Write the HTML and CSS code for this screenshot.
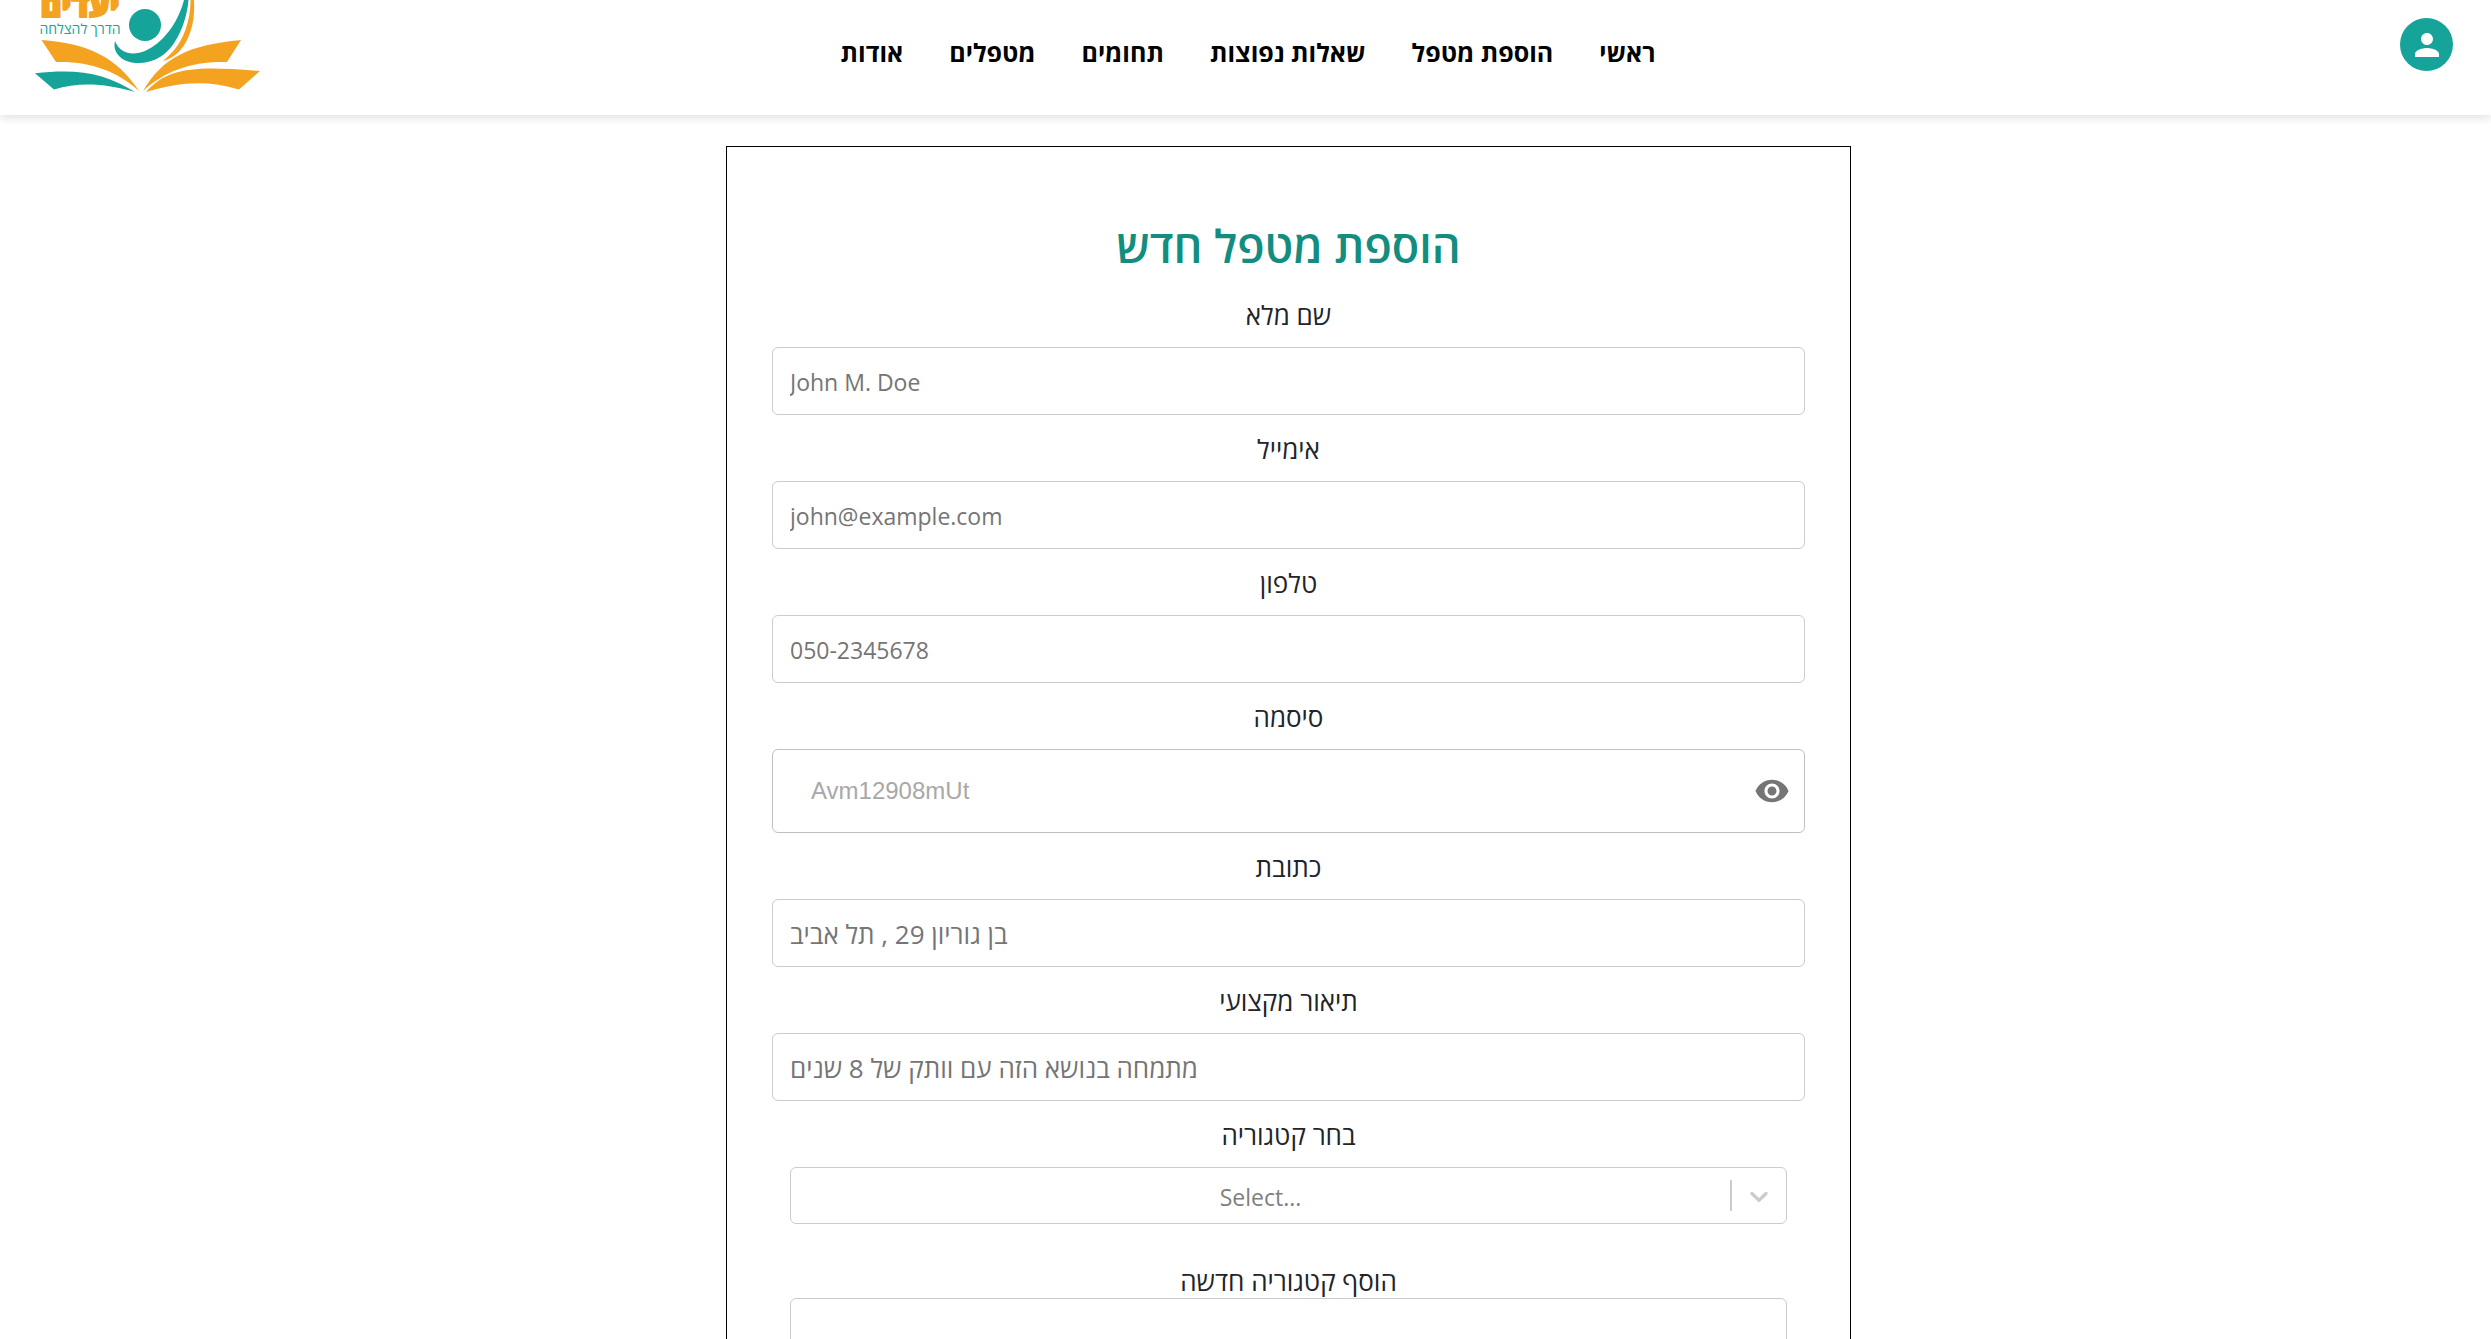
FILE: index.html
```html
<!DOCTYPE html>
<html lang="he">
<head>
<meta charset="utf-8">
<meta name="viewport" content="width=device-width, initial-scale=1">
<title>הוספת מטפל חדש</title>
<link rel="stylesheet" href="styles.css">
</head>
<body>
<header class="site-header">
  <a class="logo" href="#" aria-label="יעדים">
    <svg class="logo-art" viewBox="35 0 226 94" aria-hidden="true">
      <text class="logo-name" x="80" y="17" text-anchor="middle">יעדים</text>
      <text class="logo-tagline" x="80" y="34" text-anchor="middle">הדרך להצלחה</text>
      <g fill="#16a399">
        <circle cx="145" cy="25" r="16"/>
        <path d="M115 41C120 54 133 56 145 51C163 43 178 23 184 0H188.500C187 20 177 47 160 57C147 65 129 65 120 57C114 51 114 46 115 41Z"/>
        <path d="M35 73.300C80 68 106 74 135 92C104 83 79 82 54 89.500Z"/>
      </g>
      <g fill="#f4a321">
        <path d="M190.500 0H194C195 18 192 31 186 42C181 51 174 58 163 61C174 52 181 42 185 31C189 20 190.500 10 190.500 0Z"/>
        <path d="M41.500 40C87 43 117 57 139 91C117 71 90 61 56 62Z"/>
        <path d="M241 40C189 45 163 57 143 91C165 71 191 61 227 62Z"/>
        <path d="M260 71C199 66 168 66 146 92C180 82 207 80 239 89.500Z"/>
      </g>
    </svg>
  </a>
  <nav class="main-nav" dir="rtl">
    <a href="#">ראשי</a>
    <a href="#">הוספת מטפל</a>
    <a href="#">שאלות נפוצות</a>
    <a href="#">תחומים</a>
    <a href="#">מטפלים</a>
    <a href="#">אודות</a>
  </nav>
  <button class="account" type="button" aria-label="חשבון">
    <svg viewBox="0 0 24 24" aria-hidden="true"><path d="M12 12c2.210 0 4-1.790 4-4s-1.790-4-4-4-4 1.790-4 4 1.790 4 4 4zm0 2c-2.670 0-8 1.340-8 4v2h16v-2c0-2.660-5.330-4-8-4z"/></svg>
  </button>
</header>

<main class="page">
  <form class="card">
    <h1 class="title">הוספת מטפל חדש</h1>

    <div class="field">
      <label for="name">שם מלא</label>
      <input class="text-box" id="name" type="text" placeholder="John M. Doe">
    </div>
    <div class="field">
      <label for="email">אימייל</label>
      <input class="text-box" id="email" type="email" placeholder="john@example.com">
    </div>
    <div class="field">
      <label for="phone">טלפון</label>
      <input class="text-box" id="phone" type="tel" placeholder="050-2345678">
    </div>
    <div class="field">
      <label for="password">סיסמה</label>
      <div class="password-box">
        <input id="password" type="password" placeholder="Avm12908mUt">
        <button class="reveal" type="button" aria-label="הצג סיסמה">
          <svg viewBox="0 0 24 24" aria-hidden="true"><path d="M12 4.500C7 4.500 2.730 7.610 1 12c1.730 4.390 6 7.500 11 7.500s9.270-3.110 11-7.500c-1.730-4.390-6-7.500-11-7.500zM12 17c-2.760 0-5-2.240-5-5s2.240-5 5-5 5 2.240 5 5-2.240 5-5 5zm0-8c-1.660 0-3 1.340-3 3s1.340 3 3 3 3-1.340 3-3-1.340-3-3-3z"/></svg>
        </button>
      </div>
    </div>
    <div class="field">
      <label for="address">כתובת</label>
      <input class="text-box hebrew" id="address" type="text" placeholder="בן גוריון 29 , תל אביב">
    </div>
    <div class="field">
      <label for="about">תיאור מקצועי</label>
      <input class="text-box hebrew" id="about" type="text" placeholder="מתמחה בנושא הזה עם וותק של 8 שנים">
    </div>
    <div class="field">
      <label for="category">בחר קטגוריה</label>
      <div class="select-box">
        <select id="category"><option>Select...</option></select>
        <span class="divider"></span>
        <svg viewBox="0 0 20 20" aria-hidden="true"><path d="M4.516 7.548c0.436-0.446 1.043-0.481 1.576 0l3.908 3.747 3.908-3.747c0.533-0.481 1.141-0.446 1.574 0 0.436 0.445 0.408 1.197 0 1.615-0.406 0.418-4.695 4.502-4.695 4.502-0.217 0.223-0.502 0.335-0.787 0.335s-0.570-0.112-0.789-0.335c0 0-4.287-4.084-4.695-4.502s-0.436-1.170 0-1.615z"/></svg>
      </div>
    </div>
    <div class="field field-new">
      <label for="new-category">הוסף קטגוריה חדשה</label>
      <input class="text-box" id="new-category" type="text">
    </div>
  </form>
</main>
</body>
</html>
```
FILE: styles.css
```css
* {
  box-sizing: border-box;
}

body {
  margin: 0;
  background: #fff;
  color: #212529;
  font: 23px/36px "Open Sans", "Noto Sans", sans-serif;
}

input,
select,
button {
  font: inherit;
  color: inherit;
}

/* Header */
.site-header {
  display: grid;
  grid-template-columns: 1fr auto 1fr;
  align-items: start;
  height: 115px;
  padding: 0 38px 0 35px;
  background: #fff;
  box-shadow: 0 3px 9px rgba(0, 0, 0, 0.12);
}

.logo {
  justify-self: start;
}

.logo-art {
  display: block;
  width: 226px;
  height: 94px;
}

.logo-name {
  fill: #f4a321;
  stroke: #f4a321;
  stroke-width: 2px;
  stroke-linejoin: round;
  font-size: 32px;
  font-weight: 800;
}

.logo-tagline {
  fill: #16a399;
  font-size: 14px;
}

.main-nav {
  display: flex;
  gap: 46px;
  padding: 34px 0 0 8px;
}

.main-nav a {
  color: #000;
  font-size: 25px;
  font-weight: 700;
  text-decoration: none;
}

.account {
  display: grid;
  place-items: center;
  justify-self: end;
  width: 53px;
  height: 53px;
  margin-top: 18px;
  padding: 0;
  border: 0;
  border-radius: 50%;
  background: #16a399;
}

.account svg {
  width: 36px;
  height: 36px;
  fill: #fff;
}

/* Form */
.page {
  padding: 31px 0 0 86px;
}

.card {
  max-width: 1125px;
  margin: 0 auto;
  padding: 72px 45px;
  border: 1px solid #000;
}

.title {
  margin: 0 0 26px;
  color: #138d80;
  font-size: 45px;
  font-weight: 600;
  line-height: 54px;
  text-align: center;
}

.field {
  display: flex;
  flex-direction: column;
  gap: 16px;
  margin-bottom: 18px;
}

.field label {
  font-size: 26px;
  line-height: 32px;
  text-align: center;
}

.text-box {
  width: 100%;
  height: 68px;
  padding: 2px 17px 0;
  border: 1px solid #ccc;
  border-radius: 6px;
  background: #fff;
}

.text-box::placeholder {
  color: #757575;
  opacity: 1;
}

.hebrew {
  font-size: 26px;
}

.password-box {
  display: flex;
  align-items: center;
  height: 84px;
  padding: 0 14px 0 38px;
  border: 1px solid #c0c0c0;
  border-radius: 6px;
}

.password-box input {
  flex: 1;
  min-width: 0;
  padding: 0;
  border: 0;
  background: none;
  font-family: "Liberation Sans", Arial, sans-serif;
  font-size: 24px;
}

.password-box input::placeholder {
  color: #a8a8a8;
  opacity: 1;
}

.reveal {
  display: flex;
  padding: 0;
  border: 0;
  background: none;
}

.reveal svg {
  width: 36px;
  height: 36px;
  fill: #757575;
}

.select-box {
  display: flex;
  align-items: center;
  height: 57px;
  margin: 0 18px;
  padding-right: 12px;
  border: 1px solid #ccc;
  border-radius: 6px;
}

.select-box select {
  flex: 1;
  min-width: 0;
  padding: 2px 0 0;
  border: 0;
  background: none;
  color: #808080;
  appearance: none;
  text-align: center;
  text-align-last: center;
}

.divider {
  width: 2px;
  height: 31px;
  margin-right: 12px;
  background: #ccc;
}

.select-box svg {
  width: 30px;
  height: 30px;
  fill: #ccc;
}

.field-new {
  gap: 1px;
  margin: 41px 18px 0;
}
```
